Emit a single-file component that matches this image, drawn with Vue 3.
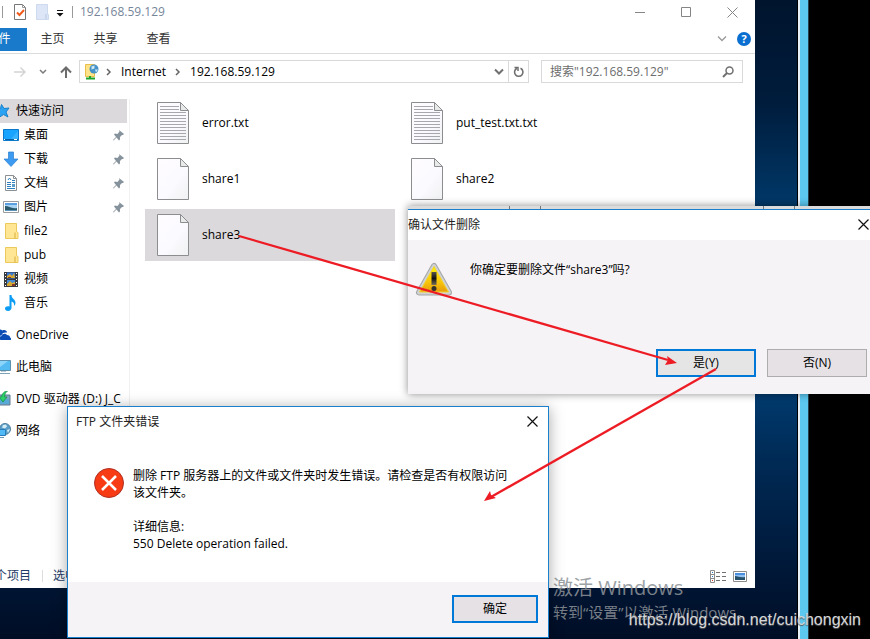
<script setup>
import { ref } from 'vue'

const query = ref('')
const tabs = ['主页', '共享', '查看']
const quick = [
  { name: '桌面', icon: 'desktop', pinned: true },
  { name: '下载', icon: 'download', pinned: true },
  { name: '文档', icon: 'document', pinned: true },
  { name: '图片', icon: 'picture', pinned: true },
  { name: 'file2', icon: 'folder' },
  { name: 'pub', icon: 'folder' },
  { name: '视频', icon: 'video' },
  { name: '音乐', icon: 'music' }
]
const roots = [
  { name: 'OneDrive', icon: 'cloud' },
  { name: '此电脑', icon: 'computer' },
  { name: 'DVD 驱动器 (D:) J_C', icon: 'dvd' },
  { name: '网络', icon: 'network' }
]
const files = [
  { name: 'error.txt', text: true },
  { name: 'put_test.txt.txt', text: true },
  { name: 'share1' },
  { name: 'share2' },
  { name: 'share3', selected: true }
]
</script>

<template>
  <div class="screen" lang="zh-CN">
    <div class="desktop"></div>
    <div class="edge"></div>
    <div class="outside"></div>

    <svg width="0" height="0" class="defs" aria-hidden="true">
      <defs>
        <linearGradient id="sky" x1="0" y1="0" x2="0" y2="1">
          <stop offset="0" stop-color="#3f86dc" /><stop offset=".55" stop-color="#cfe6f5" />
          <stop offset=".6" stop-color="#4d7f86" /><stop offset="1" stop-color="#27506b" />
        </linearGradient>
        <linearGradient id="paper" x1="0" y1="0" x2="1" y2="1">
          <stop offset="0" stop-color="#fffcff" /><stop offset=".6" stop-color="#fafaff" /><stop offset="1" stop-color="#f0f1f1" />
        </linearGradient>
        <linearGradient id="warn" x1="0" y1="0" x2="0" y2="1">
          <stop offset="0" stop-color="#fff200" /><stop offset=".6" stop-color="#f8c60b" /><stop offset="1" stop-color="#e69b0c" />
        </linearGradient>
        <linearGradient id="mark" x1="0" y1="0" x2="0" y2="1">
          <stop offset="0" stop-color="#55544c" /><stop offset=".5" stop-color="#111" /><stop offset="1" stop-color="#77705a" />
        </linearGradient>
        <symbol id="i-star" viewBox="0 0 16 16">
          <path d="M6.500 1.500l2.500 4 5-.5-3 4 2 5-4.500-2.500L4 14.500l.5-5L1 6.500l4.500-1z" fill="#2ba3f2" stroke="#1580cb" />
        </symbol>
        <symbol id="i-desktop" viewBox="0 0 16 16">
          <path d="M.5 2.500h15v11H.5z" fill="#19a4ff" stroke="#0b78cb" />
          <path d="M1 12h14v1H1z" fill="#0864a6" /><path d="M1 12h1v1H1zM11 12h3v1h-3z" fill="#fff" /><path d="M8 12L15 4v8z" fill="#38b3ff" />
        </symbol>
        <symbol id="i-download" viewBox="0 0 16 16">
          <path d="M5.500 1h5v7H15l-7 7.500L1 8h4.500z" fill="#3c9af0" stroke="#2a7fd0" stroke-width=".7" />
        </symbol>
        <symbol id="i-document" viewBox="0 0 16 16">
          <path d="M2.500.5h8l3 3v12h-11z" fill="#fff" stroke="#8a9094" /><path d="M10.500.5v3h3" fill="none" stroke="#8a9094" />
          <path d="M5 5l1.500-2L8 5M4 7.500h4M9 5.500h3M9 7.500h3M4 9.500h4M4 11.500h4M4 13.500h8" fill="none" stroke="#2e7fc0" />
          <path d="M9 9h3v3H9z" fill="#5b9ecb" />
        </symbol>
        <symbol id="i-picture" viewBox="0 0 16 16">
          <path d="M.5 2.500h15v11H.5z" fill="#fff" stroke="#999da0" /><path d="M2 4h12v8H2z" fill="#a9d3f2" />
          <path d="M2 4h12v2H2z" fill="#5a9fe0" /><path d="M2 7c4 0 6 3 12 2v3H2z" fill="#2b5a6d" /><path d="M2 11h12v1H2z" fill="#5b94b8" />
        </symbol>
        <symbol id="i-folder" viewBox="0 0 16 16">
          <path d="M2.500.5h11v8l1.500 1v6H2.500z" fill="#ffe694" stroke="#ecc95c" /><path d="M12 9.500v6" stroke="#d9ad38" />
        </symbol>
        <symbol id="i-video" viewBox="0 0 16 16">
          <path d="M1 1h14v15H1z" fill="#373b40" /><path d="M4 1.500h8v6H4z" fill="#3979d8" /><path d="M4 9h8v6H4z" fill="#438bd7" />
          <path d="M4 5l3-2 2 2 2-3 1 5H4zM4 13l3-3 2 2 3-1v4H4z" fill="#d9a831" /><path d="M5 6h3v1H5zM9 13h3v2H9z" fill="#853829" />
          <path d="M2.500 2v13M13.500 2v13" stroke="#fff" stroke-dasharray="1 2" />
        </symbol>
        <symbol id="i-music" viewBox="0 0 16 16">
          <path d="M6.500 0h2c0 4 4 4 4 8 0 1-.5 2-1.500 3 .5-3-1-4-2.500-4.500V13c0 1.500-1.500 3-3.500 3S2 15 2 13.500 4 11 6.500 11.500z" fill="#0b9df4" />
        </symbol>
        <symbol id="i-cloud" viewBox="0 0 16 16">
          <path d="M1 11a3 3 0 01.5-5.500C2 3 5 1.500 7.500 3.500c2-1 4.500 0 4.500 2-3-.5-5 .5-5.500 3C4 8.500 3.500 11 4 12z" fill="#0b4db5" />
          <path d="M5.500 13a2.200 2.200 0 011-4c.5-2.500 4-3 5.500-1 2 0 3 1 3 2.500 1.500.5 1.500 2.500 0 2.500z" fill="#0b4db5" />
        </symbol>
        <symbol id="i-computer" viewBox="0 0 16 16">
          <path d="M.5 1.500h15v10H.5z" fill="#54baf2" stroke="#5b8fae" /><path d="M1 11L13 2H1z" fill="#8cd5fa" /><path d="M3 14h12v1H3z" fill="#7da1b5" /><path d="M6 12h5v1H6z" fill="#b8cdd8" />
        </symbol>
        <symbol id="i-dvd" viewBox="0 0 16 16">
          <path d="M1 7l3-3h11v10H1z" fill="#7fa4bd" stroke="#5d7d94" /><path d="M2 8h12v5H2z" fill="#58a8d8" />
          <path d="M12.500 0C9 0 7 3 6.500 6H4l4 5 4-5h-2.500c0-3 1-4 3-6z" fill="#2bd068" stroke="#128c3e" stroke-width=".7" />
        </symbol>
        <symbol id="i-network" viewBox="0 0 16 16">
          <circle cx="10" cy="6" r="5.500" fill="#5b9fc8" stroke="#4f7f9d" /><path d="M8 2l3-.5 1 2-2 2-3-1zM12 7l3-1-2 4z" fill="#d4edf6" />
          <path d="M.5 6.500h10v6H.5z" fill="#4fbaf5" stroke="#287ebb" /><path d="M3 14.500h6" stroke="#6b9bb6" />
        </symbol>
      </defs>
    </svg>

    <section class="explorer">
      <header class="titlebar">
        <i class="sep"></i>
        <svg class="check" width="14" height="16" viewBox="0 0 14 16">
          <path d="M1.500.5h8l3 3v12h-11z" fill="#fff" stroke="#777" /><path d="M9.500.5v3h3" fill="none" stroke="#999" />
          <path d="M4 8.500l2.500 2.500L11 6" fill="none" stroke="#f05a1a" stroke-width="2" />
        </svg>
        <svg class="ghost" width="14" height="16" viewBox="0 0 14 16">
          <path d="M.5.5h11v10h1v5H.5z" fill="#dce6f7" stroke="#ccd9ef" /><path d="M10 10v5" stroke="#b4c7e4" />
        </svg>
        <svg class="drop" width="8" height="8" viewBox="0 0 8 8"><path d="M1 1.500h6" stroke="#111" /><path d="M.5 4h7L4 7.500z" fill="#111" /></svg>
        <i class="sep"></i>
        <h1>192.168.59.129</h1>
        <div class="controls">
          <button aria-label="最小化"><svg width="11" height="11"><path d="M0 5.500h10" stroke="#858585" /></svg></button>
          <button aria-label="最大化"><svg width="11" height="11"><path d="M.5.5h9v9h-9z" fill="none" stroke="#858585" /></svg></button>
          <button aria-label="关闭"><svg width="11" height="11"><path d="M.5.5l10 10M10.500.5l-10 10" stroke="#858585" /></svg></button>
        </div>
      </header>

      <nav class="ribbon">
        <button class="filetab">文件</button>
        <button v-for="t in tabs" :key="t" class="tab">{{ t }}</button>
        <button class="expand" aria-label="展开功能区"><svg width="10" height="6"><path d="M1 .5l4 4 4-4" fill="none" stroke="#999" stroke-width="1.300" /></svg></button>
        <button class="help" aria-label="帮助">?</button>
      </nav>

      <div class="addressrow">
        <button aria-label="前进"><svg width="12" height="12"><path d="M0 6h11M6.500 1.500L11 6l-4.500 4.500" fill="none" stroke="#d4d4d4" stroke-width="1.500" /></svg></button>
        <button class="history" aria-label="最近位置"><svg width="8" height="6"><path d="M1 1l3 3 3-3" fill="none" stroke="#7a7a7a" stroke-width="1.500" /></svg></button>
        <button class="up" aria-label="上移"><svg width="12" height="12"><path d="M6 12V1.500M1 6.500l5-5 5 5" fill="none" stroke="#6c6c6c" stroke-width="2" /></svg></button>
        <div class="address">
          <svg width="16" height="16" viewBox="0 0 16 16">
            <path d="M1.500.5h9v12h-9z" fill="#ffe38b" stroke="#e9bf4a" /><path d="M6 12v3M2 14.500h9" stroke="#20a52b" stroke-width="2" />
            <circle cx="10" cy="5" r="4.500" fill="#4592c9" /><path d="M7.500 2.500l3-1 0 3-3 1zM11 5.500h3l-2 3z" fill="#cfeaf5" />
          </svg>
          <svg class="chev" width="6" height="8"><path d="M1 1l3 3-3 3" fill="none" stroke="#666" stroke-width="1.500" /></svg>
          <a href="#internet">Internet</a>
          <svg class="chev" width="6" height="8"><path d="M1 1l3 3-3 3" fill="none" stroke="#666" stroke-width="1.500" /></svg>
          <a href="#host">192.168.59.129</a>
          <button class="more" aria-label="以前的位置"><svg width="10" height="8"><path d="M1 1.500l4 4 4-4" fill="none" stroke="#707070" stroke-width="2" /></svg></button>
          <button class="refresh" aria-label="刷新"><svg width="12" height="12" viewBox="0 0 12 12"><path d="M7.500 2.300A4.200 4.200 0 114 2.300" fill="none" stroke="#707070" stroke-width="1.600" /><path d="M1.500 1.500H5V5" fill="none" stroke="#707070" stroke-width="1.500" /></svg></button>
        </div>
        <label class="search">
          <input v-model="query" type="text" aria-label="搜索" placeholder='搜索"192.168.59.129"' />
          <svg width="12" height="12"><circle cx="7.500" cy="4.500" r="3.500" fill="none" stroke="#707070" stroke-width="1.500" /><path d="M5 7L1 11" stroke="#707070" stroke-width="2" /></svg>
        </label>
      </div>

      <div class="body">
        <nav class="sidebar">
          <a href="#quick" class="item root current"><svg width="16" height="16"><use href="#i-star" /></svg>快速访问</a>
          <a v-for="q in quick" :key="q.name" href="#quick" class="item">
            <svg width="16" height="16"><use :href="'#i-' + q.icon" /></svg>{{ q.name }}
            <svg v-if="q.pinned" class="pin" width="11" height="11" viewBox="0 0 11 11">
              <path d="M6 0l5 4-1 1-1 0-2 2 0 2.500-1 1-2.500-3L.5 10.500 0 10l3-3L1 4.500l1-1 2.500.5 2-2.500z" fill="#87939c" />
            </svg>
          </a>
          <a v-for="r in roots" :key="r.name" href="#root" class="item root spaced">
            <svg width="16" height="16"><use :href="'#i-' + r.icon" /></svg>{{ r.name }}
          </a>
        </nav>
        <main class="files">
          <button v-for="f in files" :key="f.name" class="file" :class="{ selected: f.selected }">
            <svg width="32" height="42" viewBox="0 0 32 42">
              <path d="M.5.5h23l8 8v33H.5z" fill="url(#paper)" stroke="#8b8d8e" />
              <path d="M23.500.5v8h8z" fill="#e8eaea" stroke="#8b8d8e" />
              <path v-if="f.text" d="M3 4.500h19M3 7.500h19M3 10.500h26M3 13.500h26M3 16.500h26M3 19.500h26M3 22.500h26M3 25.500h26M3 28.500h26M3 31.500h26M3 34.500h26M3 37.500h26" stroke="#a6a8ad" />
            </svg>
            {{ f.name }}
          </button>
        </main>
      </div>

      <footer class="status">
        <span>5 个项目</span><i></i><span>选中 1 个项目</span>
        <div class="views">
          <button aria-label="详细信息"><svg width="17" height="13"><path d="M.5.5h4v12h-4zM.5 4.500h4M.5 8.500h4" fill="none" stroke="#8c8c8c" /><path d="M6 2.500h4M12 2.500h4M6 6.500h4M12 6.500h4M6 10.500h4M12 10.500h4" stroke="#707070" /><path d="M2 2h1v1H2zM2 6h1v1H2z" fill="#2b78c9" /><path d="M2 10h1v1H2z" fill="#d33" /></svg></button>
          <button aria-label="大图标"><svg width="14" height="11"><path d="M.5.5h13v10H.5z" fill="#fff" stroke="#8c8c8c" /><path d="M2 2h10v7H2z" fill="#8fc0f0" /><path d="M2 2h10v2H2z" fill="#4a8ee0" /><path d="M2 5c3 0 5 2 10 1v3H2z" fill="#27506b" /></svg></button>
        </div>
      </footer>
    </section>

    <div class="activate">
      <p class="big">激活 Windows</p>
      <p>转到“设置”以激活 Windows。</p>
    </div>
    <p class="credit">https://blog.csdn.net/cuichongxin</p>

    <section class="confirm" role="dialog" aria-labelledby="confirm-title">
      <div class="ruler"><i></i><i></i><i></i><i></i></div>
      <header>
        <h2 id="confirm-title">确认文件删除</h2>
        <button aria-label="关闭"><svg width="11" height="11"><path d="M.5.5l10 10M10.500.5l-10 10" stroke="#111" stroke-width="1.200" /></svg></button>
      </header>
      <div class="message">
        <svg width="38" height="34" viewBox="0 0 38 34">
          <path d="M19 4L4 30.500h30z" fill="#a9abad" stroke="#a3a5a7" stroke-width="6" stroke-linejoin="round" />
          <path d="M19 4L4 30.500h30z" fill="#d5d7d8" stroke="#cfd1d3" stroke-width="4" stroke-linejoin="round" />
          <path d="M19 4.500L4.500 30h29z" fill="url(#warn)" stroke="#f5d430" stroke-linejoin="round" />
          <path d="M16.500 10h5v13h-5z" fill="url(#mark)" /><circle cx="19" cy="26.500" r="2.500" fill="#33322c" />
        </svg>
        <p>你确定要删除文件“share3”吗?</p>
      </div>
      <footer><button class="btn primary">是(Y)</button><button class="btn">否(N)</button></footer>
    </section>

    <section class="error" role="dialog" aria-labelledby="error-title">
      <header>
        <h2 id="error-title">FTP 文件夹错误</h2>
        <button aria-label="关闭"><svg width="11" height="11"><path d="M.5.5l10 10M10.500.5l-10 10" stroke="#111" stroke-width="1.200" /></svg></button>
      </header>
      <div class="message">
        <svg width="30" height="30"><circle cx="15" cy="15" r="14.500" fill="#f73b14" stroke="#b03022" /><path d="M8 8l14 14M22 8L8 22" stroke="#fff" stroke-width="2.500" /></svg>
        <div>
          <p>删除 FTP 服务器上的文件或文件夹时发生错误。请检查是否有权限访问该文件夹。</p>
          <p class="detail">详细信息:<br />550 Delete operation failed.</p>
        </div>
      </div>
      <footer><button class="btn primary">确定</button></footer>
    </section>

    <svg class="arrows" width="870" height="639" aria-hidden="true">
      <g stroke="#ed1c24" stroke-width="2.300">
        <path d="M239 236L668 360" /><path d="M716 369L491 497" />
      </g>
      <path d="M677 363l-10-7 1 4-3 5zM484 501l6-10 1 4 5 3z" fill="#ed1c24" />
    </svg>
  </div>
</template>

<style>
body { margin: 0; overflow: hidden; }
</style>

<style scoped>
* { box-sizing: border-box; }
.screen {
  position: relative; display: flex; min-height: 100vh; overflow: hidden;
  font: 12px/16px "Open Sans", "Noto Sans CJK SC", sans-serif; color: #000; background: #000;
}
.defs { position: absolute; }
h1, h2, p { margin: 0; font-size: inherit; font-weight: 400; }
button { display: flex; align-items: center; justify-content: center; padding: 0; border: 0; background: none; font: inherit; color: inherit; }
a { color: inherit; text-decoration: none; }
svg { flex: none; display: block; }
.desktop { flex: 1; background: linear-gradient(#00142d, #001c3c 16%, #003868 32%, #003d72 60%, #002a55 72%, #00193a 88%, #000d25); }
.edge { width: 11px; border-left: 2px solid #e8f0f8; border-right: 1px solid #27414c; background: #5cc8f0; margin-left: 1px; }
.outside { width: 61px; background: #000; }

.explorer { position: absolute; left: -30px; right: 115px; top: 0; height: 588px; display: flex; flex-direction: column; background: #fff; }
.titlebar { display: flex; align-items: center; height: 24px; padding-left: 32px; color: #76869a; }
.sep { width: 1px; height: 12px; background: #999; }
.check { margin-left: 10px; }
.ghost { margin-left: 9px; }
.drop { margin: 2px 12px 0 6px; }
.drop + .sep { margin-left: -4px; }
.titlebar h1 { margin-left: 7px; }
.controls { display: flex; margin-left: auto; }
.controls button { width: 46px; height: 22px; }
.ribbon { display: flex; align-items: center; height: 30px; padding-top: 1px; border-bottom: 1px solid #dadbdc; color: #333; }
.filetab { width: 57px; height: 23px; background: #1979ca; color: #fff; }
.tab { width: 53px; height: 23px; }
.tab:nth-child(2) { margin-left: -1px; }
.expand { margin-left: auto; }
.help { width: 14px; height: 14px; margin: 0 4px 0 10px; border-radius: 50%; background: #0a6fd0; color: #fff; font-weight: 700; font-size: 11px; line-height: 14px; }
.addressrow { display: flex; align-items: center; height: 35px; padding: 0 12px 0 44px; }
.history { margin-left: 13px; }
.up { margin: 0 7px 0 13px; }
.address { display: flex; flex: 1; align-items: center; height: 23px; padding-left: 4px; border: 1px solid #d9d9d9; }
.chev { margin: 0 9px 0 6px; }
.address a + .chev { margin-left: 9px; }
.more { margin-left: auto; width: 18px; }
.refresh { width: 20px; height: 21px; border-left: 1px solid #d9d9d9; }
.search { display: flex; align-items: center; width: 202px; height: 23px; margin-left: 12px; padding: 0 8px; border: 1px solid #d9d9d9; }
.search input { flex: 1; min-width: 0; padding: 0; border: 0; outline: 0; background: none; font: inherit; }
.search input::placeholder { color: #6d6d6d; opacity: 1; }
.body { display: flex; flex: 1; padding-top: 10px; min-height: 0; }
.sidebar { width: 160px; border-right: 1px solid #f0f0f0; }
.item { display: flex; align-items: center; gap: 5px; width: 157px; height: 24px; padding-left: 33px; white-space: nowrap; }
.root { padding-left: 25px; }
.current { background: #dcd9dc; }
.spaced { margin-top: 8px; }
.pin { margin: 0 3px 0 auto; }
.files { display: grid; grid-template-columns: repeat(auto-fill, 250px); grid-auto-rows: 52px; gap: 4px; flex: 1; align-content: start; padding: 0 0 0 15px; margin-top: -2px; }
.file { justify-content: flex-start; gap: 13px; padding-left: 12px; }
.selected { background: #dcd9dc; }
.status { display: flex; align-items: center; height: 24px; padding-left: 15px; color: #1e3a66; }
.status i { width: 1px; height: 12px; margin: 0 10px 0 11px; background: #ddd; }
.views { display: flex; gap: 6px; margin-left: auto; padding-right: 8px; }

.activate { position: absolute; left: 553px; top: 576px; color: #8d9298; opacity: .85; font-size: 15px; line-height: 24px; }
.big { font-size: 20px; }
.credit { position: absolute; right: 9px; bottom: 9px; font: 16px/20px "Liberation Sans", sans-serif; color: #d4d6d8; text-shadow: 0 1px 1px #555; }

.confirm { position: absolute; left: 408px; right: 0; top: 206px; height: 188px; display: flex; flex-direction: column; background: #f6f3f6; box-shadow: 0 0 8px rgba(0, 0, 0, .45); }
.ruler { display: flex; height: 3px; padding-left: 101px; background: #dcdbdc; }
.ruler i { width: 1px; height: 3px; margin-right: 30px; background: #777; }
.ruler i:nth-child(2) { margin-right: 222px; }
.confirm header { display: flex; align-items: center; justify-content: space-between; height: 31px; border-top: 1px solid #1a7fcc; background: #fff; }
.confirm header button { padding: 0 1px 2px 0; }
.confirm .message { display: flex; gap: 17px; flex: 1; padding: 22px 0 0 7px; }
.confirm .message p { line-height: 16px; }
.confirm footer { display: flex; justify-content: flex-end; gap: 11px; padding: 0 3px 17px 0; }
.btn { width: 100px; height: 28px; border: 1px solid #adadad; background: #e5e1e5; }
.primary { border: 2px solid #0078d7; }
.confirm .primary { background: #e5e5e5; }

.error { position: absolute; left: 67px; top: 406px; width: 482px; height: 232px; display: flex; flex-direction: column; border: 1px solid #1a7fcc; background: #fff; box-shadow: 0 2px 14px rgba(0, 0, 0, .35); }
.error header { display: flex; align-items: center; justify-content: space-between; height: 30px; padding: 0 10px 0 8px; }
.error header button { padding-bottom: 2px; }
h2 { color: #222; }
.error .message { display: flex; gap: 9px; flex: 1; padding: 30px 36px 0 26px; line-height: 17px; }
.error .message svg { margin-top: 1px; }
.detail { margin-top: 17px; }
.error footer { display: flex; align-items: center; justify-content: flex-end; height: 55px; padding: 0 10px 2px 0; background: #f6f3f6; }
.error .btn { width: 86px; }
.arrows { position: absolute; left: 0; top: 0; pointer-events: none; }
</style>
